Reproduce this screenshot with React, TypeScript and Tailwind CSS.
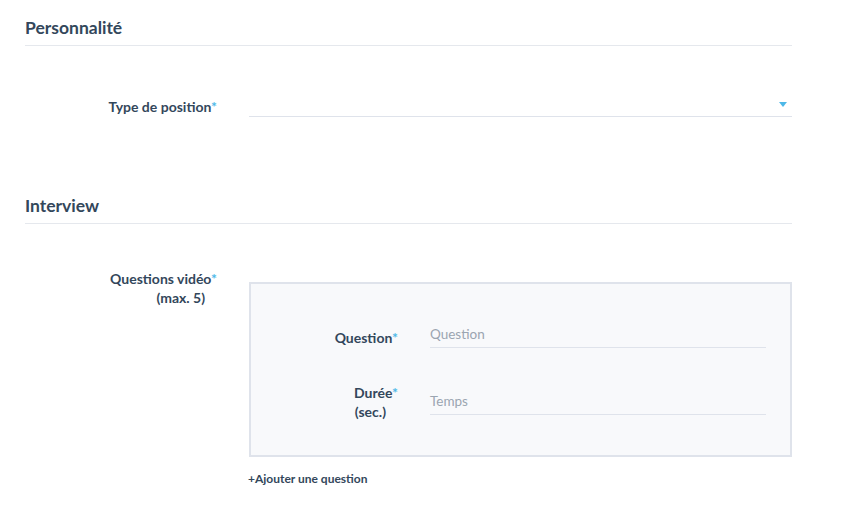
import React from 'react';

const Star = () => <span className="text-[#4db8e8]">*</span>;

export default function App() {
  return (
    <div className="w-[841px] h-[524px] bg-white text-[#33475b] font-['Lato',sans-serif] px-[25px] pt-[16px]">
      <div className="w-[767px]">
        {/* Personnalité */}
        <h2 className="text-[17.5px] leading-[24px] font-bold pb-[5px] border-b border-[#e5e8ed]">Personnalité</h2>

        <div className="flex mt-[40px]">
          <div className="w-[192px] text-right text-[14px] leading-[19px] font-bold pt-[11px]">
            Type de position<Star />
          </div>
          <div className="ml-[32px] flex-1 h-[31px] border-b border-[#dfe3eb] flex items-end justify-end pr-[5px] pb-[9px]">
            <svg width="8" height="5" viewBox="0 0 8 5">
              <path d="M0 0 H8 L4 5 Z" fill="#4db8e8" />
            </svg>
          </div>
        </div>

        {/* Interview */}
        <h2 className="mt-[77px] text-[17.5px] leading-[24px] font-bold pb-[5px] border-b border-[#e5e8ed]">Interview</h2>

        <div className="flex mt-[45px]">
          <div className="w-[192px] text-right text-[14px] leading-[19px] font-bold">
            <div>Questions vidéo<Star /></div>
            <div className="pr-[12px]">(max. 5)</div>
          </div>
          <div className="ml-[32px] flex-1">
            <div className="mt-[13px] border-2 border-[#dfe3eb] bg-[#f8f9fb] pt-[41px] pb-[34px] pr-[24px]">
              <div className="flex items-start">
                <div className="w-[147px] mt-[3px] text-right text-[14px] leading-[19px] font-bold">
                  Question<Star />
                </div>
                <div className="ml-[32px] flex-1 h-[23px] border-b border-[#dfe3eb] text-[13.5px] leading-[19px] text-[#9ba5b1]">
                  Question
                </div>
              </div>
              <div className="flex items-start mt-[35px]">
                <div className="w-[147px] text-right text-[14px] leading-[19px] font-bold">
                  <div>Durée<Star /></div>
                  <div className="pr-[12px]">(sec.)</div>
                </div>
                <div className="ml-[32px] mt-[9px] flex-1 h-[23px] border-b border-[#dfe3eb] text-[13.5px] leading-[19px] text-[#9ba5b1]">
                  Temps
                </div>
              </div>
            </div>
            <div className="mt-[14px] -ml-[1px] text-[12px] leading-[16px] font-bold">+Ajouter une question</div>
          </div>
        </div>
      </div>
    </div>
  );
}
